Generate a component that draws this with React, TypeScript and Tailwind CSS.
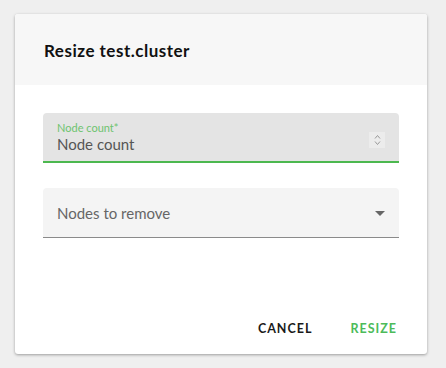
import React from "react";

export default function App() {
  return (
    <div className="w-[446px] h-[368px] bg-[#efefef] pt-[14px] pl-[15px]" style={{ fontFamily: "Lato, 'Open Sans', sans-serif" }}>
      <div className="w-[412px] h-[340px] bg-white rounded-[3px] shadow-[0_1px_3px_rgba(0,0,0,0.35)] flex flex-col overflow-hidden">
        <div className="h-[71px] bg-[#f7f7f7] flex items-center pl-[29px] pt-[2px]">
          <h1 className="text-[17px] font-bold text-[#111] tracking-[0.5px]">Resize test.cluster</h1>
        </div>
        <div className="flex flex-col px-[28px] pt-[28px] gap-[25px]">
          <div className="h-[50px] bg-[#e4e4e4] rounded-t-[4px] border-b-2 border-[#4cb84f] flex items-center pl-[14px] pr-[14px]">
            <div className="flex-1 flex flex-col">
              <span className="text-[11px] leading-[13px] text-[#6ec36f] mt-[1px]">Node count*</span>
              <span className="text-[15px] leading-[20px] text-[#555]">Node count</span>
            </div>
            <div className="w-[16px] h-[16px] bg-[#ececec] flex items-center justify-center mt-[6px]">
              <svg width="7" height="12" viewBox="0 0 7 12" fill="none" stroke="#999" strokeWidth="1">
                <path d="M1 4.5 L3.5 1.5 L6 4.5" />
                <path d="M1 7.5 L3.5 10.5 L6 7.5" />
              </svg>
            </div>
          </div>
          <div className="h-[50px] bg-[#f4f4f4] rounded-t-[4px] border-b border-[#8a8a8a] flex items-center pl-[14px] pr-[14px]">
            <span className="flex-1 text-[15px] text-[#666] pt-[1px]">Nodes to remove</span>
            <svg width="10" height="5" viewBox="0 0 10 5" className="mt-[2px]">
              <path d="M0 0 L10 0 L5 5 Z" fill="#666" />
            </svg>
          </div>
        </div>
        <div className="flex-1" />
        <div className="flex justify-end items-center gap-[38px] pr-[30px] pb-[15px]">
          <button className="text-[12.5px] font-bold tracking-[1px] text-[#1a1a1a]">CANCEL</button>
          <button className="text-[12.5px] font-bold tracking-[1px] text-[#4cbb5a]">RESIZE</button>
        </div>
      </div>
    </div>
  );
}
